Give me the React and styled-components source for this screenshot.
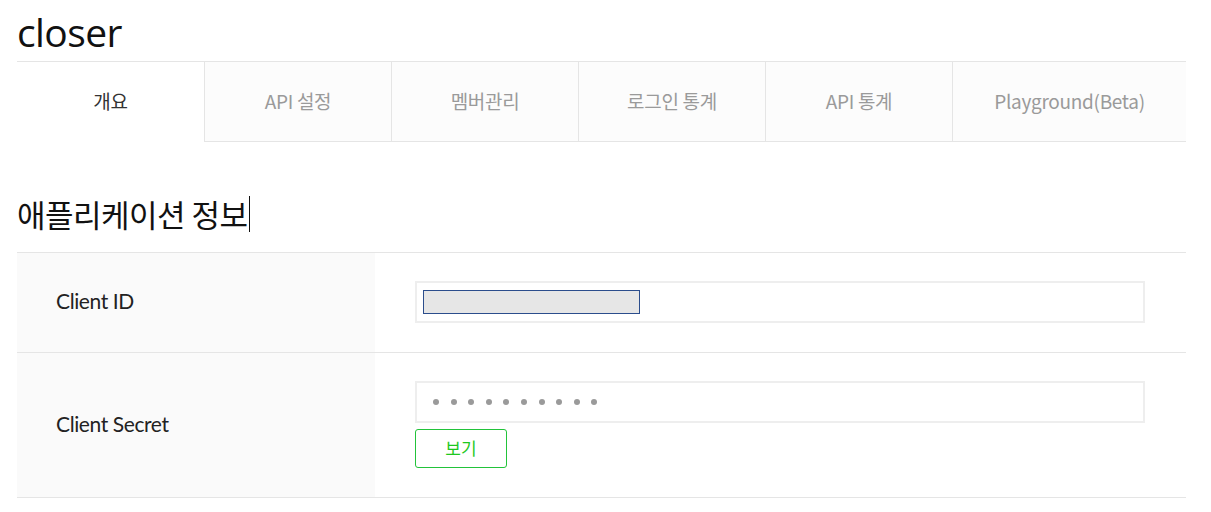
import React from 'react';
import styled, { createGlobalStyle } from 'styled-components';

const GlobalStyle = createGlobalStyle`
    body {
        margin: 0;
        background: #ffffff;
        font-family: "Noto Sans CJK KR", "Noto Sans", sans-serif;
        color: #333333;
    }
`;

const Page = styled.div`
    width: 1169px;
    padding: 0 0 0 17px;
`;

const Title = styled.h1`
    margin: 0;
    height: 61px;
    box-sizing: border-box;
    padding-top: 9px;
    font-family: "Open Sans", "Noto Sans CJK KR", sans-serif;
    font-weight: 400;
    font-size: 39px;
    line-height: 46px;
    letter-spacing: -0.6px;
    color: #111111;
`;

const Tabs = styled.ul`
    display: flex;
    margin: 0;
    padding: 0;
    list-style: none;
    border-top: 1px solid #e5e5e5;
`;

const Tab = styled.li`
    flex: ${({ $last }) => ($last ? '1' : '0 0 187px')};
    height: 80px;
    display: flex;
    align-items: center;
    justify-content: center;
    box-sizing: border-box;
    font-size: 19px;
    letter-spacing: -0.3px;
    color: ${({ $active }) => ($active ? '#333333' : '#9a9a9a')};
    background: ${({ $active }) => ($active ? '#ffffff' : '#fcfcfc')};
    border-left: ${({ $active }) => ($active ? 'none' : '1px solid #e5e5e5')};
    border-bottom: ${({ $active }) => ($active ? '1px solid transparent' : '1px solid #e5e5e5')};
    padding-bottom: 2px;
`;

const Heading = styled.h2`
    margin: 52px 0 18px;
    font-size: 31px;
    font-weight: 400;
    line-height: 40px;
    letter-spacing: -0.5px;
    color: #111111;
    display: flex;
    align-items: center;
`;

const Caret = styled.span`
    display: inline-block;
    width: 1px;
    height: 36px;
    margin-left: 1px;
    background: #111111;
`;

const Table = styled.div`
    border-top: 1px solid #e5e5e5;
`;

const Row = styled.div`
    display: flex;
    min-height: ${({ $h }) => $h}px;
    border-bottom: 1px solid #e5e5e5;
`;

const Label = styled.div`
    flex: 0 0 358px;
    box-sizing: border-box;
    padding-left: 39px;
    display: flex;
    align-items: center;
    background: #fafafa;
    font-family: "Lato", "Noto Sans CJK KR", sans-serif;
    font-size: 21px;
    letter-spacing: -0.4px;
    color: #222222;
    padding-bottom: ${({ $shift }) => $shift || 0}px;
`;

const Cell = styled.div`
    flex: 1;
    padding: 28px 0 0 40px;
    display: flex;
    flex-direction: column;
    align-items: flex-start;
`;

const Field = styled.div`
    width: 730px;
    height: 42px;
    box-sizing: border-box;
    border: 2px solid #eeeeee;
    background: #ffffff;
    display: flex;
    align-items: center;
    padding-left: 6px;
`;

const Masked = styled.span`
    width: 217px;
    height: 24px;
    box-sizing: border-box;
    background: #e6e6e6;
    border: 1px solid #2b4d8c;
`;

const Dots = styled.span`
    display: flex;
    gap: 11.6px;
    padding-left: 10px;
`;

const Dot = styled.span`
    width: 6px;
    height: 6px;
    border-radius: 50%;
    background: #9a9a9a;
`;

const Button = styled.button`
    margin-top: 6px;
    width: 92px;
    height: 39px;
    border: 1px solid #22c33a;
    border-radius: 3px;
    background: #ffffff;
    color: #1ec81e;
    font-family: "Noto Sans CJK KR", sans-serif;
    font-size: 17px;
    cursor: pointer;
    padding: 0 0 2px;
`;

const tabs = ['개요', 'API 설정', '멤버관리', '로그인 통계', 'API 통계', 'Playground(Beta)'];

function App() {
    return (
        <Page>
            <GlobalStyle />
            <Title>closer</Title>
            <Tabs>
                {tabs.map((t, i) => (
                    <Tab key={t} $active={i === 0} $last={i === tabs.length - 1}>{t}</Tab>
                ))}
            </Tabs>
            <Heading>애플리케이션 정보<Caret /></Heading>
            <Table>
                <Row $h={99}>
                    <Label $shift={4}>Client ID</Label>
                    <Cell>
                        <Field><Masked /></Field>
                    </Cell>
                </Row>
                <Row $h={144}>
                    <Label $shift={4}>Client Secret</Label>
                    <Cell>
                        <Field>
                            <Dots>
                                {Array.from({ length: 10 }).map((_, i) => <Dot key={i} />)}
                            </Dots>
                        </Field>
                        <Button>보기</Button>
                    </Cell>
                </Row>
            </Table>
        </Page>
    );
}

export default App;
